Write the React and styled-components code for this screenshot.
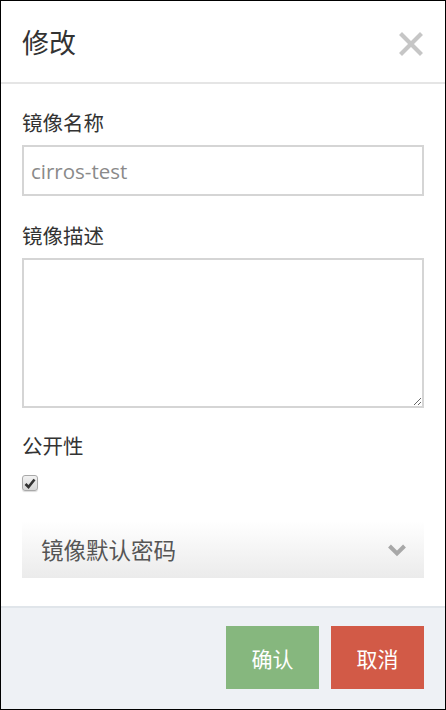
import React from 'react';
import styled, { createGlobalStyle } from 'styled-components';

const GlobalStyle = createGlobalStyle`
  html, body {
    margin: 0;
    padding: 0;
    background: #fff;
  }
  * {
    box-sizing: border-box;
  }
`;

const FONT = `"Open Sans", "Noto Sans CJK SC", sans-serif`;

const Modal = styled.div`
  width: 446px;
  height: 710px;
  border: 1px solid #000;
  display: flex;
  flex-direction: column;
  font-family: ${FONT};
  background: #fff;
`;

const Header = styled.div`
  height: 83px;
  flex-shrink: 0;
  display: flex;
  align-items: center;
  justify-content: space-between;
  padding: 0 22px 0 21px;
  border-bottom: 2px solid #e5e5e5;
`;

const Title = styled.h3`
  margin: 0;
  font-size: 27px;
  font-weight: 400;
  color: #333;
`;

const CloseButton = styled.button`
  border: none;
  background: none;
  padding: 0;
  width: 24px;
  height: 24px;
  margin-top: 4px;
  cursor: pointer;
`;

const Body = styled.div`
  flex: 1;
  padding: 26px 21px 0 21px;
  display: flex;
  flex-direction: column;
`;

const Group = styled.div`
  flex-shrink: 0;
  display: flex;
  flex-direction: column;
  margin-bottom: ${p => p.gap || 27}px;
`;

const Label = styled.label`
  font-size: 20.5px;
  line-height: 26px;
  color: #333;
  margin-bottom: ${p => p.gap || 9}px;
`;

const TextInput = styled.input`
  height: 51px;
  width: 100%;
  border: 2px solid #d5d5d5;
  padding: 0 7px;
  font-family: ${FONT};
  font-size: 20.5px;
  color: #555;
  outline: none;
  &::placeholder {
    color: #8a8a8a;
  }
`;

const TextArea = styled.textarea`
  height: 150px;
  width: 100%;
  border: 2px solid #d5d5d5;
  padding: 7px;
  font-family: ${FONT};
  font-size: 20px;
  outline: none;
  resize: vertical;
`;

const CheckBox = styled.span`
  width: 16px;
  height: 16px;
  border: 1px solid #a9a9a9;
  border-radius: 3px;
  background: linear-gradient(#f2f2f2, #d6d6d6);
  display: flex;
  align-items: center;
  justify-content: center;
  box-shadow: 0 1px 1px rgba(0, 0, 0, 0.15);
`;

const Accordion = styled.div`
  flex-shrink: 0;
  height: 57px;
  display: flex;
  align-items: center;
  justify-content: space-between;
  padding: 0 17px 0 19px;
  background: linear-gradient(#ffffff, #ebebeb);
  cursor: pointer;
`;

const AccordionTitle = styled.span`
  font-size: 22.5px;
  color: #555;
`;

const Footer = styled.div`
  height: 103px;
  flex-shrink: 0;
  border-top: 2px solid #e0e5ea;
  background: #eef1f5;
  display: flex;
  justify-content: flex-end;
  align-items: flex-start;
  gap: 12px;
  padding: 18px 21px 0 0;
`;

const Button = styled.button`
  width: 93px;
  height: 63px;
  border: none;
  background: ${p => p.color};
  color: #fff;
  font-family: ${FONT};
  font-size: 21px;
  cursor: pointer;
`;

export default function App() {
  return (
    <>
      <GlobalStyle />
      <Modal>
        <Header>
          <Title>修改</Title>
          <CloseButton aria-label="close">
            <svg width="24" height="24" viewBox="0 0 24 24">
              <path d="M3 3 L21 21 M21 3 L3 21" stroke="#c6c6c6" strokeWidth="4.2" strokeLinecap="square" />
            </svg>
          </CloseButton>
        </Header>
        <Body>
          <Group>
            <Label>镜像名称</Label>
            <TextInput placeholder="cirros-test" />
          </Group>
          <Group gap={25}>
            <Label>镜像描述</Label>
            <TextArea />
          </Group>
          <Group gap={30}>
            <Label gap={16}>公开性</Label>
            <CheckBox>
              <svg width="12" height="11" viewBox="0 0 12 11">
                <path d="M1.5 6 L4.5 9 L10.5 1.5" fill="none" stroke="#333" strokeWidth="2.6" />
              </svg>
            </CheckBox>
          </Group>
          <Accordion>
            <AccordionTitle>镜像默认密码</AccordionTitle>
            <svg width="20" height="14" viewBox="0 0 20 14">
              <path d="M2.5 3 L10 10.5 L17.5 3" fill="none" stroke="#a8a8a8" strokeWidth="4" />
            </svg>
          </Accordion>
        </Body>
        <Footer>
          <Button color="#86b77e">确认</Button>
          <Button color="#d25a47">取消</Button>
        </Footer>
      </Modal>
    </>
  );
}
